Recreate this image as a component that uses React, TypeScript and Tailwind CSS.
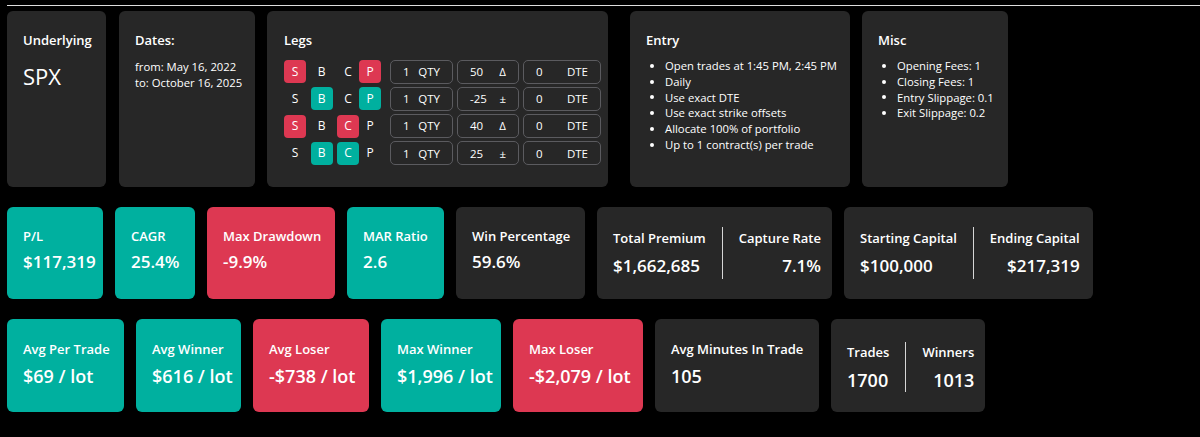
import React from 'react';

type Tone = 'teal' | 'red' | 'dark';

const toneBg: Record<Tone, string> = {
  teal: 'bg-[#00b09f]',
  red: 'bg-[#dd3852]',
  dark: 'bg-[#272727]',
};

const legs = [
  { side: 'S', type: 'P', qty: '1', strike: '50', unit: 'Δ', dte: '0' },
  { side: 'B', type: 'P', qty: '1', strike: '-25', unit: '±', dte: '0' },
  { side: 'S', type: 'C', qty: '1', strike: '40', unit: 'Δ', dte: '0' },
  { side: 'B', type: 'C', qty: '1', strike: '25', unit: '±', dte: '0' },
];

const entryItems = [
  'Open trades at 1:45 PM, 2:45 PM',
  'Daily',
  'Use exact DTE',
  'Use exact strike offsets',
  'Allocate 100% of portfolio',
  'Up to 1 contract(s) per trade',
];

const miscItems = ['Opening Fees: 1', 'Closing Fees: 1', 'Entry Slippage: 0.1', 'Exit Slippage: 0.2'];

// letter toggle used in the legs rows (S/B and C/P)
const Letter = ({ ch, on, color, className = '' }: { ch: string; on: boolean; color: string; className?: string }) => (
  <div
    className={`w-[22px] h-[23px] rounded-[4px] flex items-center justify-center text-[12px] ${on ? color : ''} ${className}`}
  >
    {ch}
  </div>
);

const Box = ({ value, unit, w }: { value: string; unit: string; w: string }) => (
  <div className={`${w} h-6 border border-[#5b5b5f] rounded-[5px] flex items-center justify-between px-3 text-[11.5px]`}>
    <span>{value}</span>
    <span>{unit}</span>
  </div>
);

const Bullets = ({ items }: { items: string[] }) => (
  <ul className="mt-2 text-[11.3px] leading-[15.8px]">
    {items.map((it) => (
      <li key={it} className="flex items-center">
        <span className="w-[19px] shrink-0 flex">
          <span className="ml-1 w-1 h-1 rounded-full bg-white" />
        </span>
        <span className="whitespace-nowrap">{it}</span>
      </li>
    ))}
  </ul>
);

const Title = ({ children }: { children: React.ReactNode }) => (
  <div className="text-[13px] font-semibold leading-[19px]">{children}</div>
);

const Stat = ({ label, value, tone, w, big }: { label: string; value: string; tone: Tone; w: string; big?: boolean }) => (
  <div className={`${w} ${toneBg[tone]} ${big ? 'h-[93px]' : 'h-[92px]'} rounded-md px-4 pt-5 whitespace-nowrap`}>
    <div className={`text-[13px] font-semibold ${big ? 'leading-5' : 'leading-[19px]'}`}>{label}</div>
    <div className={`mt-1 font-semibold ${big ? 'text-[18px] leading-[26px]' : 'text-[17px] leading-6'}`}>{value}</div>
  </div>
);

const Split = ({
  a,
  b,
  w,
  big,
}: {
  a: [string, string];
  b: [string, string];
  w: string;
  big?: boolean;
}) => {
  const label = `text-[13px] font-semibold ${big ? 'leading-5' : 'leading-[19px]'}`;
  const value = `font-semibold ${big ? 'mt-[5px] text-[18px] leading-[26px]' : 'mt-[6px] text-[17px] leading-6'}`;
  return (
    <div
      className={`${w} ${big ? 'h-[93px] pt-[3px]' : 'h-[92px]'} bg-[#272727] rounded-md px-4 flex items-center whitespace-nowrap`}
    >
      <div className="shrink-0">
        <div className={label}>{a[0]}</div>
        <div className={value}>{a[1]}</div>
      </div>
      <div className={`w-px ${big ? 'h-[50px]' : 'h-[52px]'} bg-[#d6d6d6] mx-4 shrink-0`} />
      <div className="flex-1 text-right">
        <div className={label}>{b[0]}</div>
        <div className={value}>{b[1]}</div>
      </div>
    </div>
  );
};

export default function App() {
  return (
    <div className="min-h-screen bg-black text-white pl-[7px] pt-[5px] font-['Open_Sans',sans-serif]">
      <div className="h-px bg-[#dedede]" />

      {/* settings row */}
      <div className="mt-[5px] flex">
        <div className="w-[99px] h-[176px] bg-[#272727] rounded-md px-4 pt-5">
          <Title>Underlying</Title>
          <div className="mt-[11px] text-[22px] leading-[30px]">SPX</div>
        </div>

        <div className="w-[136px] h-[176px] ml-[13px] bg-[#272727] rounded-md px-4 pt-5">
          <Title>Dates:</Title>
          <div className="mt-[9px] text-[11.3px] leading-[15.5px] whitespace-nowrap">
            <div>from: May 16, 2022</div>
            <div>to: October 16, 2025</div>
          </div>
        </div>

        <div className="w-[341px] h-[176px] ml-3 bg-[#272727] rounded-md pl-[17px] pt-5">
          <Title>Legs</Title>
          <div className="mt-[9.5px] flex flex-col gap-[3.3px]">
            {legs.map((l, i) => (
              <div key={i} className="h-6 flex items-center">
                <Letter ch="S" on={l.side === 'S'} color="bg-[#dd3852]" />
                <Letter ch="B" on={l.side === 'B'} color="bg-[#00b09f]" className="ml-[4.7px]" />
                <Letter
                  ch="C"
                  on={l.type === 'C'}
                  color={l.side === 'S' ? 'bg-[#dd3852]' : 'bg-[#00b09f]'}
                  className="ml-[4.3px]"
                />
                <Letter ch="P" on={l.type === 'P'} color={l.side === 'S' ? 'bg-[#dd3852]' : 'bg-[#00b09f]'} />
                <div className="ml-[9px] flex gap-1">
                  <Box value={l.qty} unit="QTY" w="w-[63px]" />
                  <Box value={l.strike} unit={l.unit} w="w-[62px]" />
                  <Box value={l.dte} unit="DTE" w="w-[78px]" />
                </div>
              </div>
            ))}
          </div>
        </div>

        <div className="w-[220px] h-[176px] ml-[22px] bg-[#272727] rounded-md px-4 pt-5">
          <Title>Entry</Title>
          <Bullets items={entryItems} />
        </div>

        <div className="w-[146px] h-[176px] ml-3 bg-[#272727] rounded-md px-4 pt-5">
          <Title>Misc</Title>
          <Bullets items={miscItems} />
        </div>
      </div>

      {/* headline stats */}
      <div className="mt-5 flex gap-3">
        <Stat label="P/L" value="$117,319" tone="teal" w="w-[96px]" />
        <Stat label="CAGR" value="25.4%" tone="teal" w="w-[80px]" />
        <Stat label="Max Drawdown" value="-9.9%" tone="red" w="w-[128px]" />
        <Stat label="MAR Ratio" value="2.6" tone="teal" w="w-[97px]" />
        <Stat label="Win Percentage" value="59.6%" tone="dark" w="w-[129px]" />
        <Split a={['Total Premium', '$1,662,685']} b={['Capture Rate', '7.1%']} w="w-[235px]" />
        <Split a={['Starting Capital', '$100,000']} b={['Ending Capital', '$217,319']} w="w-[249px]" />
      </div>

      {/* per trade stats */}
      <div className="mt-5 flex gap-3">
        <Stat label="Avg Per Trade" value="$69 / lot" tone="teal" w="w-[117px]" big />
        <Stat label="Avg Winner" value="$616 / lot" tone="teal" w="w-[105px]" big />
        <Stat label="Avg Loser" value="-$738 / lot" tone="red" w="w-[116px]" big />
        <Stat label="Max Winner" value="$1,996 / lot" tone="teal" w="w-[120px]" big />
        <Stat label="Max Loser" value="-$2,079 / lot" tone="red" w="w-[130px]" big />
        <Stat label="Avg Minutes In Trade" value="105" tone="dark" w="w-[164px]" big />
        <Split a={['Trades', '1700']} b={['Winners', '1013']} w="w-[154px]" big />
      </div>
    </div>
  );
}
